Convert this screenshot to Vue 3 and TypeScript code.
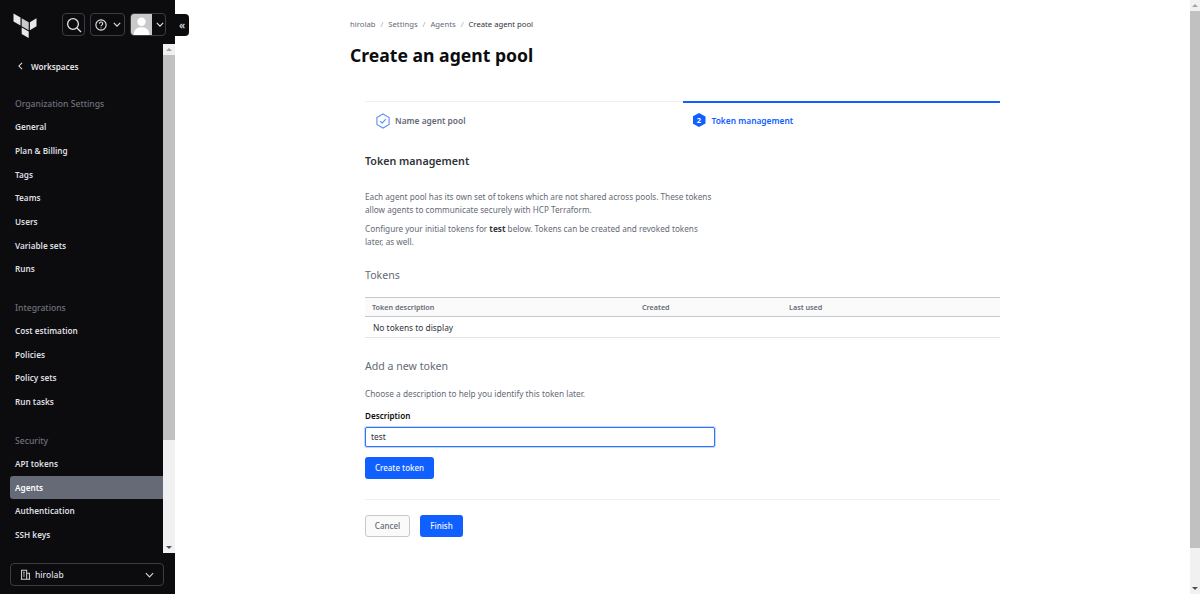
<script setup lang="ts">
interface Group { title: string; items: string[] }
const groups: Group[] = [
  { title: 'Organization Settings', items: ['General', 'Plan & Billing', 'Tags', 'Teams', 'Users', 'Variable sets', 'Runs'] },
  { title: 'Integrations', items: ['Cost estimation', 'Policies', 'Policy sets', 'Run tasks'] },
  { title: 'Security', items: ['API tokens', 'Agents', 'Authentication', 'SSH keys'] },
]
const crumbs = ['hirolab', 'Settings', 'Agents']
</script>

<template>
  <div class="page">
    <aside class="sidebar">
      <header class="top">
        <svg class="logo" viewBox="0 0 24 25" width="24" height="25">
          <path fill="#e8e8ea" d="M0.5 0.5 7.500 4.500V12.500L0.5 8.500Z" />
          <path fill="#c9c9cd" d="M8.700 5.200 15.700 9.200V17.200L8.700 13.200Z" />
          <path fill="#e8e8ea" d="M16.900 9.200 23.500 5.300V13.200L16.900 17.200Z" />
          <path fill="#e8e8ea" d="M8.700 14.600 15.700 18.600V25L8.700 21Z" />
        </svg>
        <button class="tbtn search">
          <svg viewBox="0 0 16 16" width="16" height="16" fill="none" stroke="#e4e4e7" stroke-width="1.300"><circle cx="7" cy="7" r="5.400" /><path d="M11 11l4 4" /></svg>
        </button>
        <button class="tbtn help">
          <svg viewBox="0 0 14 14" width="12" height="12" fill="none" stroke="#e4e4e7" stroke-width="1.300"><circle cx="7" cy="7" r="6" /><path d="M5.200 5.500a1.900 1.900 0 1 1 2.600 1.700c-.6.3-.8.6-.8 1.300" /><path d="M7 10v.9" /></svg>
          <svg class="chev" viewBox="0 0 10 6" width="8" height="5" fill="none" stroke="#e4e4e7" stroke-width="1.400"><path d="M1 1l4 4 4-4" /></svg>
        </button>
        <button class="tbtn user">
          <span class="avatar">
            <svg viewBox="0 0 20 20" width="20" height="20"><rect width="20" height="20" fill="#c9c9c9" /><circle cx="10" cy="7.400" r="4" fill="#fff" /><path d="M2.500 20c0-5 3-7.500 7.500-7.500s7.500 2.500 7.500 7.500z" fill="#fff" /></svg>
          </span>
          <svg class="chev" viewBox="0 0 10 6" width="8" height="5" fill="none" stroke="#e4e4e7" stroke-width="1.400"><path d="M1 1l4 4 4-4" /></svg>
        </button>
      </header>
      <button class="collapse">«</button>

      <div class="scroller">
        <nav class="nav">
          <a class="back">
            <svg viewBox="0 0 6 10" width="5" height="8" fill="none" stroke="#e4e4e7" stroke-width="1.300"><path d="M5 1 1 5l4 4" /></svg>
            <span>Workspaces</span>
          </a>
          <section v-for="g in groups" :key="g.title" class="group">
            <h3>{{ g.title }}</h3>
            <a v-for="i in g.items" :key="i" class="item" :class="{ active: i === 'Agents' }">{{ i }}</a>
          </section>
        </nav>
        <div class="bar">
          <span class="arrow up"></span>
          <div class="track"><div class="thumb side"></div></div>
          <span class="arrow down"></span>
        </div>
      </div>

      <footer class="foot">
        <button class="org">
          <svg viewBox="0 0 14 14" width="11" height="11" fill="none" stroke="#d4d4d8" stroke-width="1.300"><path d="M2 13V1.500h6.500V13M8.500 5.500H12V13M1 13h12M4 4h2M4 6.500h2M4 9h2" /></svg>
          <span>hirolab</span>
          <svg class="orgchev" viewBox="0 0 10 6" width="9" height="6" fill="none" stroke="#d4d4d8" stroke-width="1.300"><path d="M1 1l4 4 4-4" /></svg>
        </button>
      </footer>
    </aside>

    <main class="main">
      <nav class="crumbs">
        <template v-for="c in crumbs" :key="c">
          <a>{{ c }}</a><i>/</i>
        </template>
        <b>Create agent pool</b>
      </nav>
      <h1>Create an agent pool</h1>

      <div class="body">
        <div class="steps">
          <div class="step done">
            <svg viewBox="0 0 16 16" width="16" height="16" fill="none"><path d="M8 1 14.100 4.500V11.500L8 15 1.900 11.500V4.500Z" stroke="#5f90f5" stroke-width="1.100" /><path d="M5.200 8.100l2 2 3.600-4" stroke="#5f90f5" stroke-width="1.100" /></svg>
            <span>Name agent pool</span>
          </div>
          <div class="step current">
            <span class="num">2</span>
            <span>Token management</span>
          </div>
        </div>

        <h2>Token management</h2>
        <p class="intro">Each agent pool has its own set of tokens which are not shared across pools. These tokens allow agents to communicate securely with HCP Terraform.</p>
        <p class="intro second">Configure your initial tokens for <b>test</b> below. Tokens can be created and revoked tokens later, as well.</p>

        <h4>Tokens</h4>
        <table>
          <thead>
            <tr><th class="c1">Token description</th><th class="c2">Created</th><th>Last used</th></tr>
          </thead>
          <tbody>
            <tr><td colspan="3">No tokens to display</td></tr>
          </tbody>
        </table>

        <h4 class="add">Add a new token</h4>
        <p class="hint">Choose a description to help you identify this token later.</p>
        <label class="lab" for="desc">Description</label>
        <input id="desc" class="input" value="test" />
        <button class="btn primary create">Create token</button>
        <hr />
        <div class="actions">
          <button class="btn cancel">Cancel</button>
          <button class="btn primary">Finish</button>
        </div>
      </div>
    </main>

    <div class="bar pagebar">
      <span class="arrow up"></span>
      <div class="track"><div class="thumb"></div></div>
      <span class="arrow down"></span>
    </div>
  </div>
</template>

<style>
html, body { margin: 0; height: 100%; overflow: hidden; background: #fff; }
</style>

<style scoped>
* { box-sizing: border-box; }
.page {
  display: flex; height: 594px; width: 1200px; overflow: hidden;
  font-family: "Noto Sans", "Open Sans", sans-serif; color: #1f2024;
}
button { font-family: inherit; }
.sidebar {
  position: relative; width: 175px; flex: none; background: #0c0c0e;
  display: flex; flex-direction: column; color: #e4e4e7;
}
.top { height: 44px; flex: none; display: flex; align-items: flex-start; padding: 13px 0 0 13px; }
.logo { margin-right: 25px; flex: none; }
.tbtn {
  height: 23px; margin-top: 0; background: #0c0c0e; border: 1px solid #3b3d45; border-radius: 4px;
  display: flex; align-items: center; padding: 0; justify-content: center;
}
.search { width: 23px; margin-right: 5px; }
.help { width: 35px; margin-right: 5px; gap: 6px; padding-left: 1px; }
.user { width: 36px; justify-content: flex-start; gap: 4px; }
.avatar { display: flex; width: 21px; height: 21px; overflow: hidden; border-radius: 3px 0 0 3px; }
.avatar svg { width: 21px; height: 21px; }
.collapse {
  position: absolute; left: 175px; top: 14px; width: 14px; height: 22px; padding: 0;
  background: #0c0c0e; color: #c7c7cb; border: 0; border-radius: 0 4px 4px 0;
  font-size: 10px; line-height: 20px; font-weight: 700;
}
.scroller { flex: 1; min-height: 0; display: flex; padding-right: 0.5px; }
.scroller .bar { width: 11.500px; }
.nav { flex: 1; min-width: 0; padding: 0 0 0 10px; overflow: hidden; }
.back {
  display: flex; align-items: center; gap: 8px; height: 20px; margin-top: 12px;
  padding-left: 8px; font-size: 8.100px; font-weight: 600;
}
.group { margin-bottom: 16px; }
.back + .group { margin-top: 17.300px; }
.group h3 {
  margin: 0; font-size: 8.600px; line-height: 22px; height: 22px; font-weight: 500; color: #6f717b; padding-left: 5px;
}
.item {
  display: block; height: 23.700px; line-height: 23.700px; padding-left: 5px;
  font-size: 8.200px; font-weight: 600; color: #dedee1; border-radius: 3px 0 0 3px;
}
.item.active { background: #656a76; color: #fff; }
.foot { height: 41px; flex: none; padding: 10px 11px 0 10px; }
.org {
  width: 154px; height: 23px; display: flex; align-items: center; background: #0c0c0e;
  border: 1px solid #3b3d45; border-radius: 4px; padding: 0 9px; color: #dedee1;
  font-size: 8.500px; font-weight: 500; gap: 4px;
}
.orgchev { margin-left: auto; }
.bar { width: 12px; flex: none; background: #f1f1f1; display: flex; flex-direction: column; }
.arrow { height: 11px; flex: none; display: flex; align-items: center; justify-content: center; }
.arrow::before { content: ""; border-left: 3px solid transparent; border-right: 3px solid transparent; }
.arrow.up::before { border-bottom: 3px solid #a3a3a3; }
.arrow.down::before { border-top: 3px solid #505050; }
.track { flex: 1; min-height: 0; }
.thumb { height: 537px; background: #c1c1c1; }
.thumb.side { height: 385px; }
.main { flex: 1; min-width: 0; padding: 15px 0 0 175px; }
.crumbs { display: flex; align-items: center; height: 17px; font-size: 7.700px; color: #656a76; }
.crumbs i { font-style: normal; margin: 0 5px; color: #a9abb1; }
.crumbs b { font-weight: 400; color: #30333a; }
h1 { margin: 10px 0 0; font-size: 17.600px; line-height: 26px; font-weight: 700; color: #0c0c0e; }
.body { width: 635px; margin: 33px 0 0 15px; }
.steps { display: flex; height: 38px; }
.step {
  flex: 1; display: flex; align-items: center; gap: 4px; padding: 0 0 0 10px;
  font-size: 8.400px; font-weight: 600; border-top: 1px solid #efeff1; height: 38px;
}
.step.done { color: #656a76; }
.step.current { color: #1060ff; border-top: 2px solid #1060ff; gap: 6px; padding-bottom: 2px; }
.num {
  width: 13px; height: 14px; display: flex; align-items: center; justify-content: center; background: #1060ff; color: #fff;
  font-size: 7.500px; font-weight: 700; clip-path: polygon(50% 0, 100% 25%, 100% 75%, 50% 100%, 0 75%, 0 25%);
}
h2 { margin: 14px 0 0; font-size: 10.700px; line-height: 17px; font-weight: 600; color: #30333a; }
.intro { margin: 21px 0 0; width: 350px; font-size: 8.200px; line-height: 12.500px; color: #656a76; }
.intro.second { margin-top: 7px; }
.intro b { color: #30333a; font-weight: 700; }
h4 { margin: 19px 0 0; font-size: 10.600px; line-height: 17px; font-weight: 400; color: #656a76; }
table { width: 100%; margin-top: 13px; border-collapse: collapse; border-top: 1px solid #c7c8cc; border-bottom: 1px solid #e4e4e7; }
th { text-align: left; font-size: 7.200px; font-weight: 600; height: 19px; padding: 0 0 0 7px; color: #656a76; background: #fafafa; border-bottom: 1px solid #c7c8cc; }
.c1 { width: 270px; }
.c2 { width: 147px; }
td { font-size: 8.400px; height: 21px; padding: 0 0 0 8px; color: #30333a; }
.add { margin-top: 20px; }
.hint { margin: 11.500px 0 0; font-size: 8.270px; line-height: 13px; color: #656a76; }
.lab { display: block; margin-top: 9px; font-size: 8.100px; line-height: 13px; font-weight: 600; color: #0c0c0e; }
.input {
  display: block; width: 350px; height: 20px; margin-top: 5px; padding: 0 5px;
  border: 1px solid #2f74ff; border-radius: 2px; box-shadow: 0 0 0 1px #c3d6fb; outline: 0;
  font: 400 8.400px "Noto Sans", sans-serif; color: #30333a;
}
.btn {
  height: 22px; padding: 0 10px; border-radius: 3px; border: 0; font-size: 8px; font-weight: 500; display: block;
}
.primary { background: #1060ff; color: #f4f7ff; }
.create { margin-top: 10px; width: 69px; padding: 0; }
hr { margin: 20px 0 0; border: 0; border-top: 1px solid #f0f0f1; }
.actions { display: flex; gap: 10px; margin-top: 15px; }
.cancel { background: #fafafa; color: #656a76; border: 1px solid #c7c8cc; width: 45px; padding: 0; }
.actions .primary { width: 43px; padding: 0; }
.pagebar { width: 10px; }
</style>
